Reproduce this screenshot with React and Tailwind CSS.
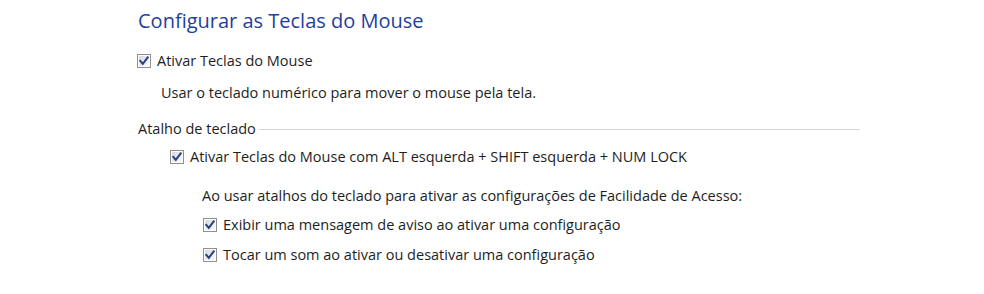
const font = { fontFamily: '"Segoe UI", "Open Sans", "Noto Sans", sans-serif' };

function CheckBox() {
  return (
    <svg width="14" height="14" viewBox="0 0 14 14" className="shrink-0">
      <defs>
        <linearGradient id="cbg" x1="0" y1="0" x2="1" y2="1">
          <stop offset="0" stopColor="#d8d9dc" />
          <stop offset="1" stopColor="#fbfbfb" />
        </linearGradient>
      </defs>
      <rect x="0.5" y="0.5" width="13" height="13" fill="#fff" stroke="#8e8f8f" />
      <rect x="2" y="2" width="10" height="10" fill="url(#cbg)" />
      <path d="M3.3 6.8 L5.8 9.8 L10.7 3.4" fill="none" stroke="#2a3f86" strokeWidth="2" strokeLinecap="square" strokeLinejoin="miter" />
    </svg>
  );
}

function CheckRow({ children, className = '' }) {
  return (
    <div className={`h-[20px] flex items-center gap-[6px] ${className}`}>
      <CheckBox />
      <span>{children}</span>
    </div>
  );
}

export default function App() {
  return (
    <div className="w-[984px] h-[294px] bg-white text-[#1e1e1e] text-[14.5px] leading-none" style={font}>
      <div className="pl-[138px] pt-[11px]">
        <h1 className="h-[20px] text-[20px] leading-[20px] text-[#1f3f9c] font-normal">Configurar as Teclas do Mouse</h1>

        <CheckRow className="mt-[20px] -ml-[1px]">Ativar Teclas do Mouse</CheckRow>
        <p className="h-[20px] flex items-center mt-[12px] ml-[23px]">Usar o teclado numérico para mover o mouse pela tela.</p>

        <div className="h-[20px] mt-[16px] flex items-center w-[722px]">
          <span>Atalho de teclado</span>
          <div className="flex-1 ml-[3px] h-px bg-[#d5d5d5]" />
        </div>

        <CheckRow className="mt-[8px] ml-[32px]">Ativar Teclas do Mouse com ALT esquerda + SHIFT esquerda + NUM LOCK</CheckRow>

        <p className="h-[20px] flex items-center mt-[19px] ml-[64px]">Ao usar atalhos do teclado para ativar as configurações de Facilidade de Acesso:</p>
        <CheckRow className="mt-[9px] ml-[65px]">Exibir uma mensagem de aviso ao ativar uma configuração</CheckRow>
        <CheckRow className="mt-[10px] ml-[65px]">Tocar um som ao ativar ou desativar uma configuração</CheckRow>
      </div>
    </div>
  );
}
